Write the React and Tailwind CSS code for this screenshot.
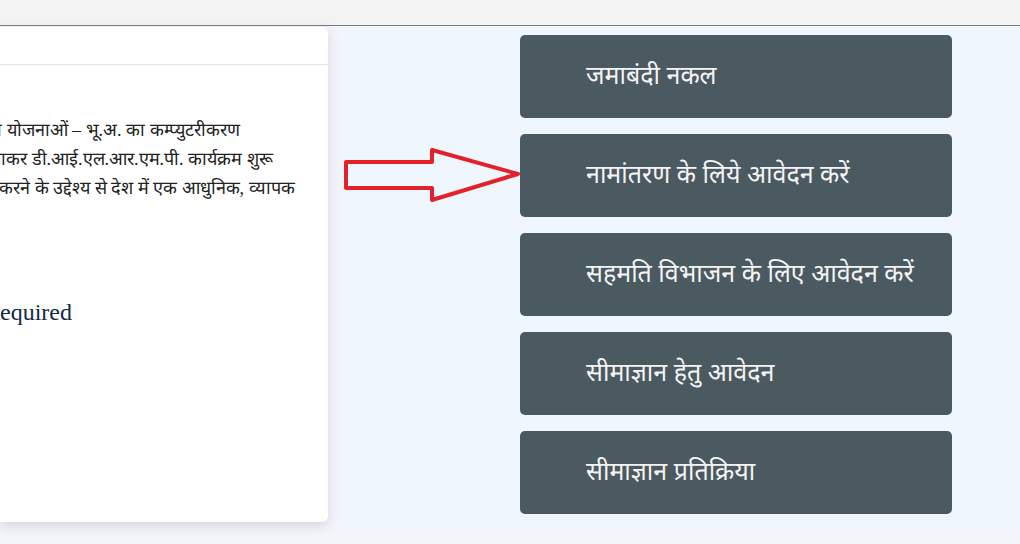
import React from 'react';

const links = [
  'जमाबंदी नकल',
  'नामांतरण के लिये आवेदन करें',
  'सहमति विभाजन के लिए आवेदन करें',
  'सीमाज्ञान हेतु आवेदन',
  'सीमाज्ञान प्रतिक्रिया',
];

function Arrow() {
  return (
    <svg width="176" height="56" viewBox="0 0 176 56" className="shrink-0 mt-[113px]">
      <polygon
        points="2,14 88,14 88,2 174,26 88,52 88,40 2,40"
        fill="none"
        stroke="#e3212b"
        strokeWidth="4"
        strokeLinejoin="round"
      />
    </svg>
  );
}

export default function App() {
  return (
    <div className="w-[1020px] h-[544px] overflow-hidden bg-[#f4f5fb] font-['Liberation_Serif',serif]">
      {/* browser-ish top strip */}
      <div className="h-[26px] bg-[#f3f3f3] border-b border-[#7b7b7b]" />

      <div className="flex items-start">
        {/* left card, cut off by the viewport */}
        <div className="w-[328px] h-[495px] mt-px bg-white rounded-r-md shadow-[0_4px_12px_rgba(120,120,160,0.25)] overflow-hidden shrink-0">
          <div className="h-[38px] border-b border-[#e3e3e3]" />
          <div className="pt-[51px] text-[18px] leading-[29px] text-[#222] whitespace-nowrap">
            <div className="-ml-[17px]">की योजनाओं – भू.अ. का कम्प्युटरीकरण</div>
            <div className="-ml-[27px]">मिलाकर डी.आई.एल.आर.एम.पी. कार्यक्रम शुरू</div>
            <div className="-ml-[1px]">करने के उद्देश्य से देश में एक आधुनिक, व्यापक</div>
          </div>
          <div className="mt-[97px] -ml-[16px] text-[24px] leading-none text-[#14294a]">Required</div>
        </div>

        {/* right panel */}
        <div className="ml-[12px] flex-1 h-[502px] bg-[#eff6fe] flex pt-[9px] pl-[4px]">
          <Arrow />
          <div className="w-[432px] flex flex-col gap-[16px]">
            {links.map((t) => (
              <a
                key={t}
                href="#"
                className="h-[83px] rounded-[5px] bg-[#4b5960] flex items-center pl-[66px] pb-[4px] text-[25px] text-[#f4f4f4] font-['Noto_Sans',sans-serif]"
              >
                {t}
              </a>
            ))}
          </div>
        </div>
      </div>
    </div>
  );
}
